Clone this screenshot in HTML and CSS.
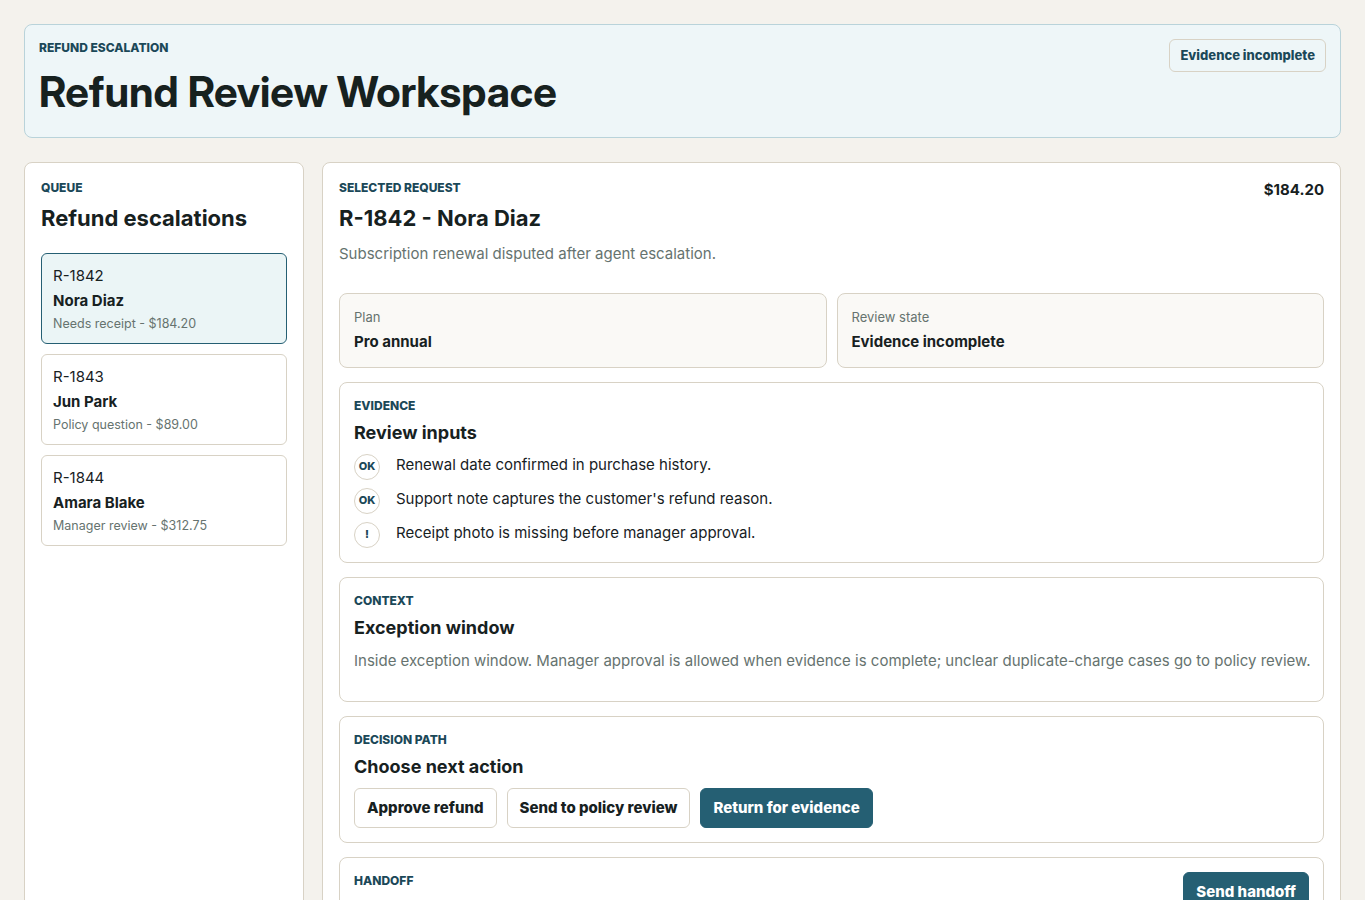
FILE: index.html
```html
<!DOCTYPE html>
<html lang="en">

<head>
    <title>Refund Review Workspace</title>
    <meta charset="utf-8">
    <meta name="viewport" content="width=device-width, initial-scale=1.0">
    <link rel="stylesheet" href="styles.css">
</head>

<body>

    <header class="topbar">
        <div>
            <p class="eyebrow">Refund escalation</p>
            <h1>Refund Review Workspace</h1>
        </div>
        <span class="status">Evidence incomplete</span>
    </header>

    <div class="workspace">
        <aside class="panel queue">
            <p class="eyebrow">Queue</p>
            <h2>Refund escalations</h2>
            <div class="queue-list">
                <button type="button" class="request selected">
                    <span>R-1842</span>
                    <strong>Nora Diaz</strong>
                    <small>Needs receipt - $184.20</small>
                </button>
                <button type="button" class="request">
                    <span>R-1843</span>
                    <strong>Jun Park</strong>
                    <small>Policy question - $89.00</small>
                </button>
                <button type="button" class="request">
                    <span>R-1844</span>
                    <strong>Amara Blake</strong>
                    <small>Manager review - $312.75</small>
                </button>
            </div>
        </aside>

        <main class="panel detail">
            <section class="split">
                <div>
                    <p class="eyebrow">Selected request</p>
                    <h2>R-1842 - Nora Diaz</h2>
                    <p class="summary">Subscription renewal disputed after agent escalation.</p>
                </div>
                <strong>$184.20</strong>
            </section>

            <section class="facts">
                <div class="fact">
                    <span>Plan</span>
                    <strong>Pro annual</strong>
                </div>
                <div class="fact">
                    <span>Review state</span>
                    <strong>Evidence incomplete</strong>
                </div>
            </section>

            <section class="card">
                <p class="eyebrow">Evidence</p>
                <h3>Review inputs</h3>
                <ul class="checks">
                    <li><span class="mark">OK</span>Renewal date confirmed in purchase history.</li>
                    <li><span class="mark">OK</span>Support note captures the customer's refund reason.</li>
                    <li><span class="mark">!</span>Receipt photo is missing before manager approval.</li>
                </ul>
            </section>

            <section class="card">
                <p class="eyebrow">Context</p>
                <h3>Exception window</h3>
                <p class="note">Inside exception window. Manager approval is allowed when evidence is complete; unclear duplicate-charge cases go to policy review.</p>
            </section>

            <section class="card">
                <p class="eyebrow">Decision path</p>
                <h3>Choose next action</h3>
                <div class="actions">
                    <button type="button" class="btn">Approve refund</button>
                    <button type="button" class="btn">Send to policy review</button>
                    <button type="button" class="btn primary">Return for evidence</button>
                </div>
            </section>

            <section class="card split">
                <p class="eyebrow">Handoff</p>
                <button type="button" class="btn primary">Send handoff</button>
            </section>
        </main>
    </div>

</body>

</html>
```
FILE: styles.css
```css
:root {
    --ink: #17211f;
    --muted: #66736f;
    --line: #d8d2c5;
    --accent: #255f73;
    --accent-dark: #1b4858;
}

* {
    box-sizing: border-box;
}

body {
    margin: 0;
    padding: 24px;
    background: #f4f2ed;
    color: var(--ink);
    font: 15px/22px Inter, "Liberation Sans", sans-serif;
}

h1,
h2,
h3,
p {
    margin: 0;
}

h1 {
    margin-bottom: 2px;
    font-family: "Inter Display", Inter, sans-serif;
    font-size: 42px;
    font-variation-settings: "opsz" 32;
    line-height: 59px;
}

h2 {
    margin-bottom: 9px;
    font-size: 22px;
    line-height: 32px;
}

h3 {
    margin-bottom: 8px;
    font-size: 18px;
    line-height: 26px;
}

button {
    font: inherit;
    color: inherit;
    cursor: pointer;
}

.eyebrow {
    margin-bottom: 6px;
    color: var(--accent-dark);
    font-size: 12px;
    font-weight: 800;
    line-height: 17px;
    text-transform: uppercase;
}

.topbar,
.split {
    display: flex;
    justify-content: space-between;
    align-items: flex-start;
    gap: 16px;
}

.topbar {
    margin-bottom: 24px;
    padding: 14px;
    border: 1px solid #b9d3da;
    border-radius: 8px;
    background: #eef6f8;
}

.status {
    padding: 6px 10px;
    border: 1px solid var(--line);
    border-radius: 6px;
    color: var(--accent-dark);
    font-size: 13px;
    font-weight: 800;
    line-height: 19px;
}

.workspace {
    display: grid;
    grid-template-columns: 280px minmax(0, 1fr);
    gap: 18px;
}

.panel {
    padding: 16px;
    border: 1px solid var(--line);
    border-radius: 8px;
    background: #fff;
}

.queue-list {
    display: grid;
    gap: 10px;
    margin-top: 19px;
}

.request {
    display: grid;
    gap: 3px;
    padding: 11px;
    border: 1px solid var(--line);
    border-radius: 6px;
    background: #fff;
    text-align: left;
}

.request small {
    color: var(--muted);
    line-height: 17px;
}

.request.selected {
    border-color: var(--accent);
    background: #ebf5f6;
}

.detail {
    display: grid;
    grid-template-columns: minmax(0, 1fr);
    gap: 14px;
}

.summary {
    margin-bottom: 14px;
    color: var(--muted);
}

.facts {
    display: grid;
    grid-template-columns: 1fr 1fr;
    gap: 10px;
}

.fact {
    display: grid;
    gap: 4px;
    padding: 14px;
    border: 1px solid var(--line);
    border-radius: 8px;
    background: #faf9f6;
}

.fact span {
    color: var(--muted);
    font-size: 13px;
    line-height: 19px;
}

.card {
    padding: 14px;
    border: 1px solid var(--line);
    border-radius: 8px;
}

.note {
    margin: 9px 0 15px;
    color: var(--muted);
}

.checks {
    display: grid;
    gap: 8px;
    margin: 0;
    padding: 0;
    list-style: none;
}

.checks li {
    display: flex;
    gap: 16px;
}

.mark {
    width: 26px;
    height: 26px;
    border: 1px solid var(--line);
    border-radius: 50%;
    color: var(--accent-dark);
    font-size: 11px;
    font-weight: 800;
    line-height: 23px;
    text-align: center;
}

.actions {
    display: flex;
    flex-wrap: wrap;
    gap: 10px;
}

.btn {
    min-height: 40px;
    padding: 0 12px;
    border: 1px solid var(--line);
    border-radius: 6px;
    background: #fff;
    font-weight: 800;
}

.btn.primary {
    border-color: var(--accent);
    background: var(--accent);
    color: #fff;
}

/* keep the policy note on one line on wide screens */
@media (min-width: 1360px) {
    .note {
        white-space: nowrap;
    }
}
```
